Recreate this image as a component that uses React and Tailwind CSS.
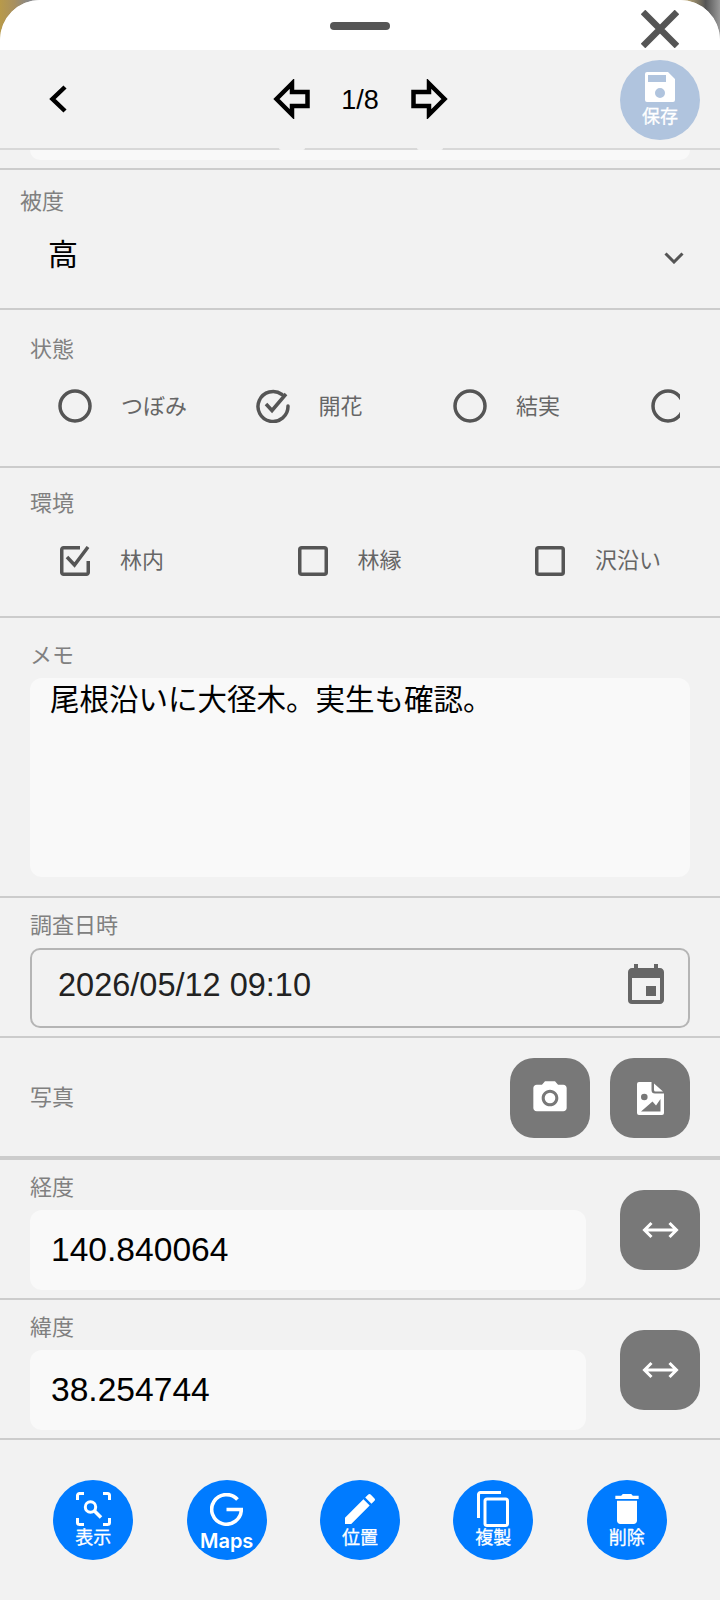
import { MdEvent, MdCameraAlt, MdEdit, MdDelete } from 'react-icons/md';

const FONT = '"Liberation Sans", "Noto Sans CJK JP", sans-serif';

const Divider = ({ className = 'h-[2px] bg-[#cccccc]' }) => <div className={`shrink-0 ${className}`} />;

const Label = ({ children }) => (
  <div className="text-[22px] leading-[24px] text-[#808080]">{children}</div>
);

const FileImageIcon = () => (
  <svg viewBox="0 0 27 33" className="w-[27px] h-[33px]" fill="white">
    <path fillRule="evenodd" d="M2 0h12.500v8a3.500 3.500 0 0 0 3.500 3.500h9V31a2 2 0 0 1-2 2H2a2 2 0 0 1-2-2V2a2 2 0 0 1 2-2zM7.300 11.700a3.300 3.300 0 1 0 0 6.600 3.300 3.300 0 0 0 0-6.600zM4 29.500h19.500V17l-4.500 6.500-3.500-4z" />
    <path d="M17 1.500 26 9.500h-7.500a1.500 1.500 0 0 1-1.500-1.500z" />
  </svg>
);

const SwapIcon = () => (
  <svg viewBox="0 0 37 18" className="w-[37px] h-[18px]" fill="none" stroke="white" strokeWidth="3">
    <path d="M2 9h33M9.500 2 2.500 9l7 7M27.500 2l7 7-7 7" />
  </svg>
);

const FloppyIcon = () => (
  <svg viewBox="0 0 30 30" className="w-[30px] h-[30px]" fill="white">
    <path fillRule="evenodd" d="M2 0h21l7 7v21a2 2 0 0 1-2 2H2a2 2 0 0 1-2-2V2a2 2 0 0 1 2-2zM3 3v7h18V3zM15 16a5 5 0 1 0 0 10 5 5 0 0 0 0-10z" />
  </svg>
);

const ScanSearchIcon = () => (
  <svg viewBox="0 0 35 34" className="w-[35px] h-[34px]" fill="none" stroke="white" strokeWidth="3">
    <path d="M1.500 8V3.500a2 2 0 0 1 2-2H8M27 1.500h4.500a2 2 0 0 1 2 2V8M1.500 26v4.500a2 2 0 0 0 2 2H8M27 32.500h4.500a2 2 0 0 0 2-2V26" />
    <circle cx="14.500" cy="15" r="5.200" />
    <path d="m18.500 19 6.500 6.500" strokeWidth="3.500" />
  </svg>
);

const GoogleGIcon = () => (
  <svg viewBox="0 0 33 33" className="w-[33px] h-[33px]" fill="none" stroke="white" strokeWidth="3.600">
    <path d="M27.500 6.500A14.800 14.800 0 1 0 31.300 16.500H16.500" />
  </svg>
);

const CopyIcon = () => (
  <svg viewBox="0 0 32 36" className="w-[32px] h-[36px]" fill="none" stroke="white" strokeWidth="3">
    <path d="M24 1.500H3.500a2 2 0 0 0-2 2V27" />
    <rect x="8" y="8" width="22.500" height="26.500" rx="2" />
  </svg>
);

const RoundAction = ({ icon, label, labelClass = 'mt-[2px] text-[18px] [-webkit-text-stroke:0.3px_white]' }) => (
  <button className="w-[80px] h-[80px] rounded-full bg-[#007bff] text-white flex flex-col items-center pt-[11px] overflow-hidden">
    <span className="h-[36px] flex items-center">{icon}</span>
    <span className={`leading-[18px] whitespace-nowrap ${labelClass}`}>{label}</span>
  </button>
);

const GrayButton = ({ children }) => (
  <button className="w-[80px] h-[80px] rounded-[24px] bg-[#787878] flex items-center justify-center shrink-0">
    {children}
  </button>
);

// the last radio runs past the clipped edge of the row, its label is out of view
const RADIOS = [
  { id: 'bud', label: 'つぼみ', checked: false },
  { id: 'flower', label: '開花', checked: true },
  { id: 'fruit', label: '結実', checked: false },
  { id: 'other', label: '', checked: false },
];

const CHECKS = [
  { label: '林内', checked: true },
  { label: '林縁', checked: false },
  { label: '沢沿い', checked: false },
];

const Radio = ({ checked }) => (
  <svg viewBox="0 0 34 34" className="w-[34px] h-[34px] shrink-0" fill="none" stroke="#555555" strokeWidth="3.500">
    {checked ? (
      <>
        <path d="M26 5.500A15 15 0 1 0 32 17" strokeLinecap="round" />
        <path d="m10 15 6 6.500L30 5" />
      </>
    ) : (
      <circle cx="17" cy="17" r="15" />
    )}
  </svg>
);

const Check = ({ checked }) => (
  <svg viewBox="0 0 30 30" className="w-[30px] h-[30px] shrink-0" fill="none" stroke="#555555" strokeWidth="3.500">
    {checked ? (
      <>
        <path d="M20 1.750H3.500a1.750 1.750 0 0 0-1.750 1.750v23a1.750 1.750 0 0 0 1.750 1.750h23a1.750 1.750 0 0 0 1.750-1.750V15" />
        <path d="m7 11 7.500 8L28 1" />
      </>
    ) : (
      <rect x="1.750" y="1.750" width="26.500" height="26.500" rx="2" />
    )}
  </svg>
);

const CoordRow = ({ label, value }) => (
  <div className="h-[138px] pl-[30px] pr-[20px] pt-[16px] flex items-start justify-between shrink-0">
    <div className="w-[556px]">
      <Label>{label}</Label>
      <div className="mt-[10px] h-[80px] rounded-[12px] bg-[#f9f9f9] pl-[21px] flex items-center text-[33.600px] text-black">
        {value}
      </div>
    </div>
    <div className="mt-[14px]">
      <GrayButton><SwapIcon /></GrayButton>
    </div>
  </div>
);

export default function App() {
  return (
    <div
      className="w-[720px] h-[1600px] overflow-hidden bg-[linear-gradient(90deg,#b89a4a_0,#a89060_2%,#888888_4%,#eeeeee_50%,#c9b27a_95%,#555555_98%,#999999_100%)]"
      style={{ fontFamily: FONT }}
    >
      <div className="h-full rounded-t-[40px] overflow-hidden bg-[#f2f2f2] flex flex-col">
        {/* drag handle area */}
        <div className="h-[50px] bg-white relative flex justify-center pt-[22px] shrink-0">
          <div className="w-[60px] h-[8px] rounded-full bg-[#555555]" />
          <svg viewBox="0 0 38 38" className="absolute left-[641px] top-[10px] w-[38px] h-[38px]" stroke="#555555" strokeWidth="6.500">
            <path d="M2 2l34 34M36 2 2 36" />
          </svg>
        </div>

        {/* nav bar */}
        <div className="h-[98px] relative z-10 flex items-center shrink-0">
          <svg viewBox="0 0 18 28" className="ml-[49px] w-[18px] h-[28px]" fill="none" stroke="black" strokeWidth="4.500">
            <path d="M16 2 3.500 14 16 26" />
          </svg>
          <svg viewBox="0 0 37 40" className="ml-[206px] w-[37px] h-[40px]" fill="none" stroke="black" strokeWidth="4.500">
            <path d="M19 4.500 3.500 20 19 35.500V27h15.500V13H19z" />
          </svg>
          <div className="ml-[32px] w-[36px] pt-[2px] flex justify-center text-[27px] font-light text-black whitespace-nowrap">1/8</div>
          <svg viewBox="0 0 37 40" className="ml-[33px] w-[37px] h-[40px]" fill="none" stroke="black" strokeWidth="4.500">
            <path d="M18 4.500 33.500 20 18 35.500V27H2.500V13H18z" />
          </svg>
          {/* round button shadows that hide the line below */}
          <div className="absolute left-[279px] top-[98px] w-[26px] h-[2px] rounded-b-full bg-[#f2f2f2]" />
          <div className="absolute left-[417px] top-[98px] w-[26px] h-[2px] rounded-b-full bg-[#f2f2f2]" />
          <button className="absolute left-[620px] top-[10px] w-[80px] h-[80px] rounded-full bg-[#b0c4de] text-white flex flex-col items-center pt-[12px]">
            <FloppyIcon />
            <span className="text-[18px] leading-[18px] mt-[6px] [-webkit-text-stroke:0.3px_white]">保存</span>
          </button>
        </div>
        <Divider className="h-[2px] bg-[#d8d8d8]" />

        {/* previous input, scrolled under the nav bar */}
        <div className="h-[18px] px-[30px] shrink-0">
          <div className="h-[10px] rounded-b-[12px] bg-[#f9f9f9]" />
        </div>
        <Divider />

        {/* 被度 */}
        <div className="h-[138px] pl-[20px] pr-[36px] pt-[20px] shrink-0">
          <Label>被度</Label>
          <div className="mt-[28px] h-[32px] flex items-start justify-between pl-[28px] text-[30px] leading-[32px] text-black">
            <span className="-mt-[3px]">高</span>
            <svg viewBox="0 0 20 12" className="mt-[10px] w-[20px] h-[12px]" fill="none" stroke="#555555" strokeWidth="3">
              <path d="m1.500 1.500 8.500 8.500 8.500-8.500" />
            </svg>
          </div>
        </div>
        <Divider />

        {/* 状態 */}
        <div className="h-[156px] pl-[30px] pt-[28px] shrink-0">
          <Label>状態</Label>
          <div className="mt-[26px] w-[650px] overflow-hidden flex">
            {RADIOS.map((r) => (
              <div key={r.id} className="w-[197.500px] shrink-0 pl-[28px] flex items-center">
                <Radio checked={r.checked} />
                {r.label && (
                  <span className="ml-[29px] pt-[2px] text-[22px] text-[#666666] whitespace-nowrap">{r.label}</span>
                )}
              </div>
            ))}
          </div>
        </div>
        <Divider />

        {/* 環境 */}
        <div className="h-[148px] pl-[30px] pt-[24px] shrink-0">
          <Label>環境</Label>
          <div className="mt-[28px] flex">
            {CHECKS.map((c) => (
              <div key={c.label} className="w-[237.500px] shrink-0 pl-[30px] flex items-center">
                <Check checked={c.checked} />
                <span className="ml-[30px] text-[22px] text-[#666666] whitespace-nowrap">{c.label}</span>
              </div>
            ))}
          </div>
        </div>
        <Divider />

        {/* メモ */}
        <div className="h-[278px] px-[30px] pt-[26px] shrink-0">
          <Label>メモ</Label>
          <div className="mt-[10px] h-[199px] rounded-[12px] bg-[#f9f9f9] px-[20px] text-[29.500px] leading-[44px] text-black">
            尾根沿いに大径木。実生も確認。
          </div>
        </div>
        <Divider />

        {/* 調査日時 */}
        <div className="h-[138px] px-[30px] pt-[16px] shrink-0">
          <Label>調査日時</Label>
          <div className="mt-[10px] h-[80px] rounded-[10px] border-2 border-[#b5b5b5] pl-[26px] pr-[18px] pb-[5px] flex items-center justify-between text-[32.500px] text-[#222222]">
            <span>2026/05/12 09:10</span>
            <MdEvent size={48} color="#666666" />
          </div>
        </div>
        <Divider />

        {/* 写真 */}
        <div className="h-[118px] px-[30px] pt-[2px] flex items-center justify-between shrink-0">
          <Label>写真</Label>
          <div className="flex gap-[20px]">
            <GrayButton><MdCameraAlt size={40} color="white" /></GrayButton>
            <GrayButton><FileImageIcon /></GrayButton>
          </div>
        </div>
        <Divider className="h-[4px] bg-[#cccccc]" />

        <CoordRow label="経度" value="140.840064" />
        <Divider />
        <CoordRow label="緯度" value="38.254744" />
        <Divider />

        {/* bottom actions */}
        <div className="pt-[40px] flex justify-evenly">
          <RoundAction icon={<ScanSearchIcon />} label="表示" />
          <RoundAction icon={<GoogleGIcon />} label="Maps" labelClass="mt-[5px] text-[20px] font-semibold font-['Inter']" />
          <RoundAction icon={<MdEdit size={40} />} label="位置" />
          <RoundAction icon={<CopyIcon />} label="複製" />
          <RoundAction icon={<MdDelete size={40} />} label="削除" />
        </div>
      </div>
    </div>
  );
}
